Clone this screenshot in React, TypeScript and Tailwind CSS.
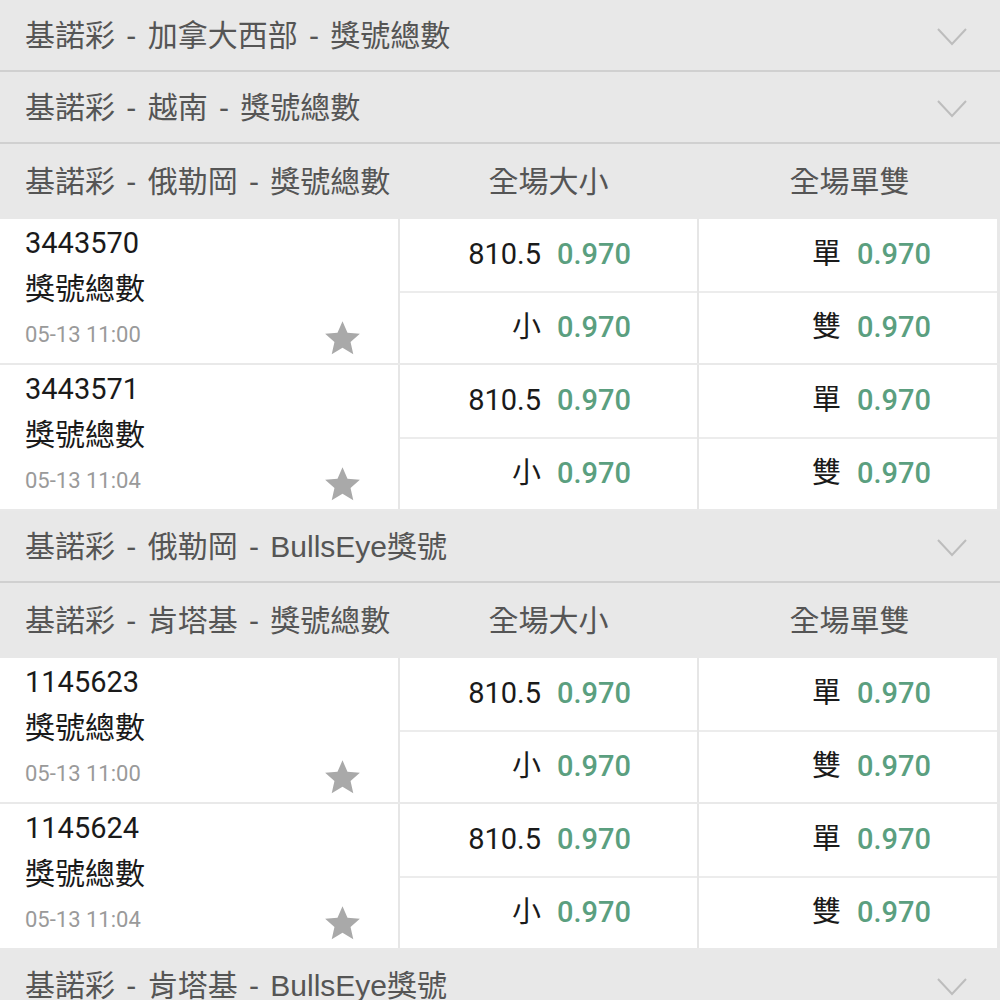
const CJK = "font-['Roboto','Noto_Sans_CJK_TC',sans-serif]";
const TITLE = "font-['Liberation_Sans','Noto_Sans_CJK_TC',sans-serif] [word-spacing:3px]";

type Match = { id: string; time: string };

const SECTIONS: { title: string; open: boolean; matches: Match[] }[] = [
  { title: '基諾彩 - 加拿大西部 - 獎號總數', open: false, matches: [] },
  { title: '基諾彩 - 越南 - 獎號總數', open: false, matches: [] },
  {
    title: '基諾彩 - 俄勒岡 - 獎號總數',
    open: true,
    matches: [
      { id: '3443570', time: '05-13 11:00' },
      { id: '3443571', time: '05-13 11:04' },
    ],
  },
  { title: '基諾彩 - 俄勒岡 - BullsEye獎號', open: false, matches: [] },
  {
    title: '基諾彩 - 肯塔基 - 獎號總數',
    open: true,
    matches: [
      { id: '1145623', time: '05-13 11:00' },
      { id: '1145624', time: '05-13 11:04' },
    ],
  },
  { title: '基諾彩 - 肯塔基 - BullsEye獎號', open: false, matches: [] },
];

function Chevron() {
  return (
    <svg width="32" height="20" viewBox="0 0 32 20" fill="none" className="mt-[4px] shrink-0">
      <path d="M2 2 L16 17 L30 2" stroke="#bdbdbd" strokeWidth="2" />
    </svg>
  );
}

function Star() {
  return (
    <svg width="39" height="37" viewBox="0 0 24 23" className="mt-[6px] shrink-0">
      <path
        d="M12 0.8 L15.1 7.9 L22.8 8.6 L17 13.7 L18.7 21.3 L12 17.3 L5.3 21.3 L7 13.7 L1.2 8.6 L8.9 7.9 Z"
        fill="#a9a9a9"
      />
    </svg>
  );
}

function Odds({ label, value }: { label: string; value: string }) {
  return (
    <div className="flex h-[72px] items-center justify-end pr-[66px]">
      <span className="text-[29px] text-[#1a1a1a]">{label}</span>
      <span className="ml-[16px] text-[29px] font-medium text-[#5b9f7f]">{value}</span>
    </div>
  );
}

function MatchRow({ m }: { m: Match }) {
  return (
    <div className="flex h-[146px] border-b-2 border-[#e9e9e9] bg-white">
      <div className="flex w-[398px] flex-col pl-[25px] pr-[36px] pt-[1px]">
        <div className="text-[29px] leading-[46px] text-[#1a1a1a]">{m.id}</div>
        <div className="text-[30px] leading-[46px] text-[#1a1a1a]">獎號總數</div>
        <div className="flex items-center justify-between">
          <span className="text-[22px] leading-[46px] text-[#9a9a9a]">{m.time}</span>
          <Star />
        </div>
      </div>
      <div className="flex w-[299px] flex-col border-l-2 border-[#e6e6e6]">
        <div className="border-b-2 border-[#ececec]">
          <Odds label="810.5" value="0.970" />
        </div>
        <Odds label="小" value="0.970" />
      </div>
      <div className="flex flex-1 flex-col border-l-2 border-r-[3px] border-l-[#e6e6e6] border-r-[#e8e8e8]">
        <div className="border-b-2 border-[#ececec]">
          <Odds label="單" value="0.970" />
        </div>
        <Odds label="雙" value="0.970" />
      </div>
    </div>
  );
}

export default function App() {
  return (
    <div className={`w-[1000px] h-[1000px] overflow-hidden bg-[#e8e8e8] ${CJK}`}>
      {SECTIONS.map((s) =>
        s.open ? (
          <div key={s.title}>
            <div className={`flex h-[75px] items-center bg-[#e8e8e8] text-[30px] text-[#555555] ${TITLE}`}>
              <div className="w-[398px] pl-[25px]">{s.title}</div>
              <div className="w-[301px] text-center">全場大小</div>
              <div className="flex-1 text-center">全場單雙</div>
            </div>
            {s.matches.map((m) => (
              <MatchRow key={m.id} m={m} />
            ))}
          </div>
        ) : (
          <div
            key={s.title}
            className={`flex h-[72px] items-center justify-between border-b-2 border-[#d0d0d0] bg-[#e8e8e8] pl-[25px] pr-[32px] text-[30px] text-[#555555] ${TITLE}`}
          >
            <span>{s.title}</span>
            <Chevron />
          </div>
        ),
      )}
    </div>
  );
}
